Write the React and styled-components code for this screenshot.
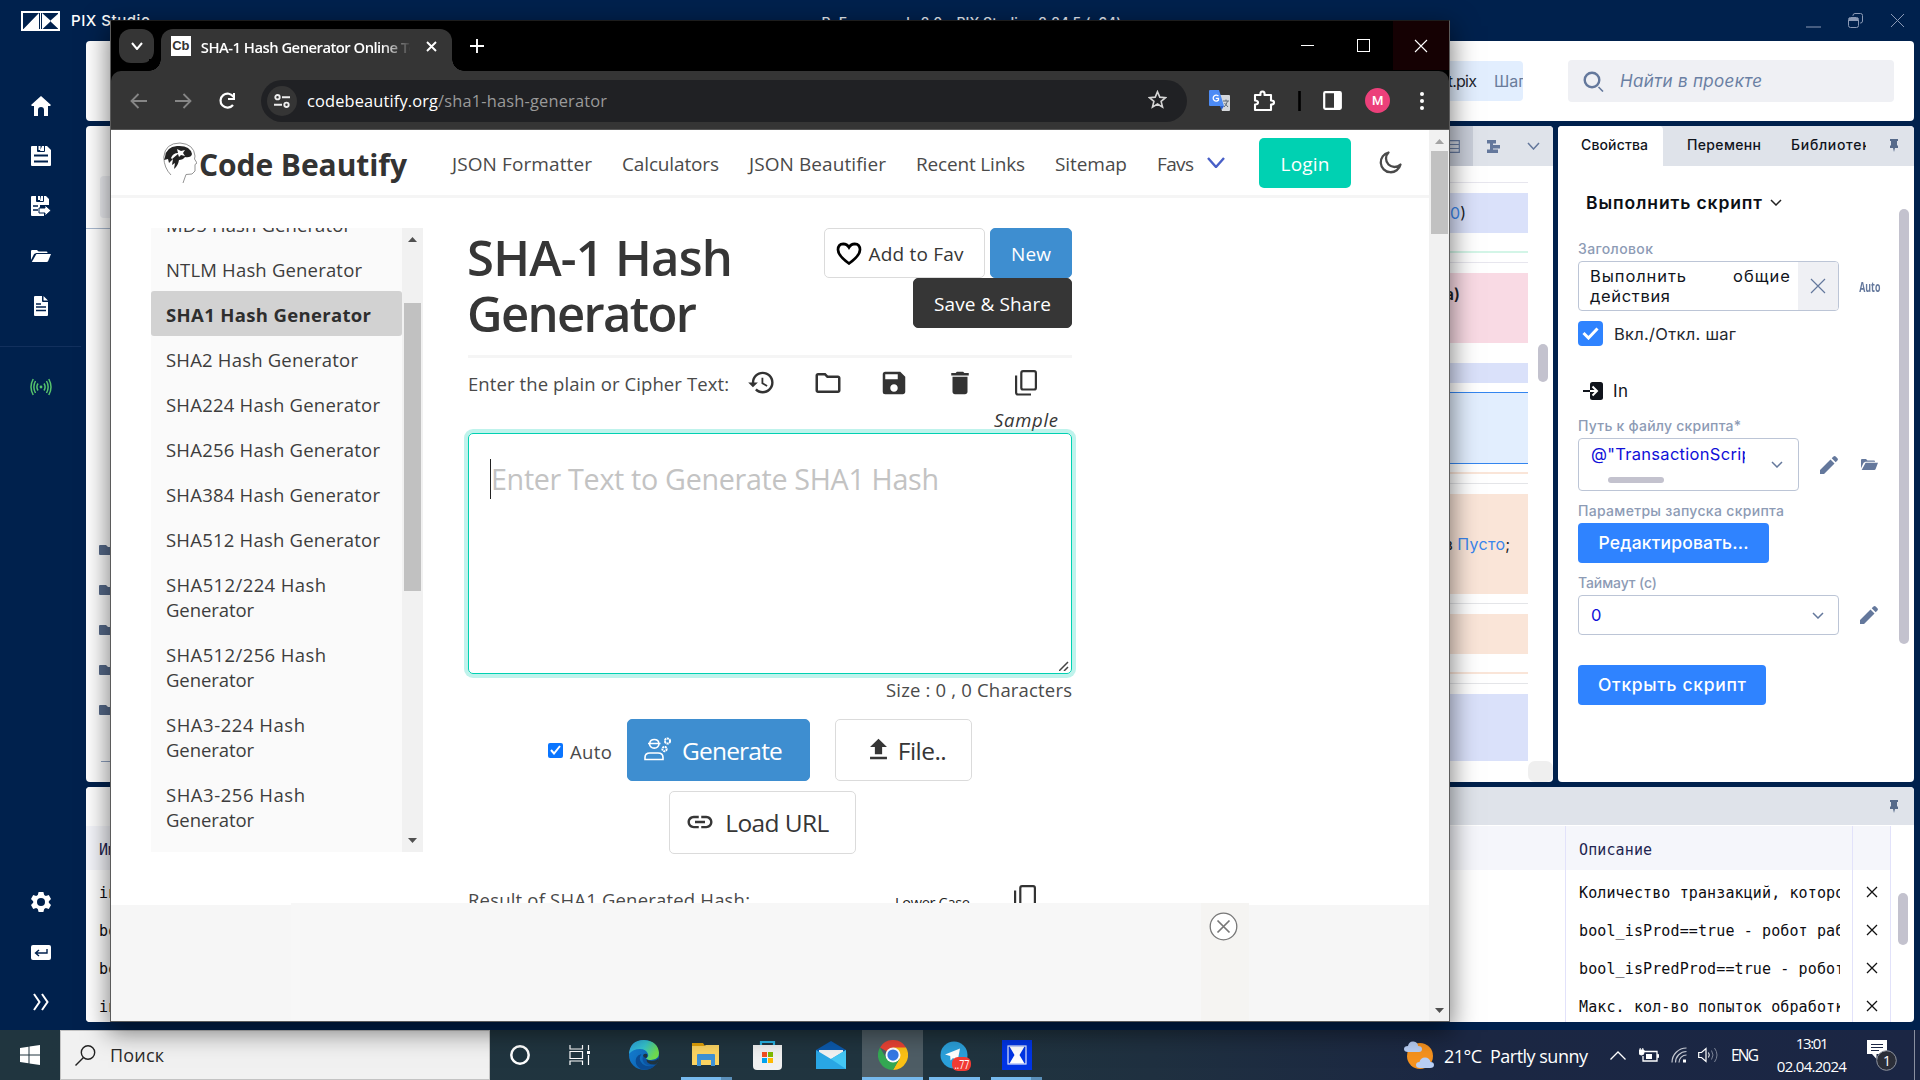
import React, { useLayoutEffect, useRef } from "react";
import styled, { createGlobalStyle, css } from "styled-components";
import { MdHistory, MdOutlineFolder, MdSave, MdDelete, MdUpload, MdLink } from "react-icons/md";

const ui = '"Open Sans", "Noto Sans", sans-serif';
const geo = 'Inter, "Open Sans", sans-serif';
const mono = '"DejaVu Sans Mono", "Liberation Mono", monospace';

const Global = createGlobalStyle`
  * { box-sizing: border-box; }
  body { margin: 0; overflow: hidden; font-family: ${ui}; }
  button { font-family: inherit; }
  svg { display: block; flex: none; }
`;

/* Text run whose tracking is computed so that it fills a known width. */
const Run = styled.span`
  display: inline-block;
  white-space: pre;
  flex: none;
`;
function Fit({ w, children }) {
  const ref = useRef(null);
  useLayoutEffect(() => {
    const el = ref.current;
    el.style.width = "auto";
    el.style.letterSpacing = "0px";
    const natural = el.getBoundingClientRect().width;
    el.style.letterSpacing = `${(w - natural) / (children.length - 1)}px`;
    el.style.width = `${w}px`;
  }, [w, children]);
  return <Run ref={ref}>{children}</Run>;
}

const Svg = ({ s, h, box, children, ...rest }) => (
  <svg width={s} height={h || s} viewBox={box || `0 0 ${s} ${h || s}`} fill="none" {...rest}>{children}</svg>
);

const Desktop = styled.div`
  position: relative;
  width: 1920px;
  height: 1080px;
  display: flex;
  flex-direction: column;
  overflow: hidden;
  background: #00214d;
`;

/* ---------- PIX Studio ---------- */
const Studio = styled.div`
  height: 1030px;
  display: flex;
  flex-direction: column;
  background: #00214d;
  font-family: ${geo};
`;
const StudioBar = styled.header`
  height: 41px;
  display: grid;
  grid-template-columns: 1fr auto 1fr;
  align-items: center;
  padding: 0 15px 0 21px;
  color: #e9edf4;
  font-size: 14px;
  font-weight: 500;
`;
const Caption = styled.div`padding: 3px 0 0 17px;`;
const Brand = styled.div`
  display: flex;
  align-items: center;
  gap: 11px;
  color: #fff;
  font-size: 15px;
`;
const WinButtons = styled.div`
  display: flex;
  justify-content: flex-end;
  gap: 27px;
`;
const StudioBody = styled.div`
  flex: 1;
  display: flex;
  min-height: 0;
`;
const Rail = styled.nav`
  width: 86px;
  padding: 40px 0 3px;
  display: flex;
  flex-direction: column;
`;
const RailItem = styled.div`
  height: 50px;
  width: 82px;
  display: flex;
  align-items: center;
  justify-content: center;
`;
const RailLine = styled.div`
  width: 81px;
  height: 1px;
  margin: 15px 0;
  background: #12305d;
`;
const Grow = styled.div`flex: 1;`;
const Workspace = styled.div`
  width: 1828px;
  display: flex;
  flex-direction: column;
  gap: 5px;
  padding-bottom: 8px;
`;
const Panel = styled.section`
  background: #fff;
  border-radius: 4px;
  overflow: hidden;
  display: flex;
  flex-direction: column;
`;
const Ribbon = styled(Panel)`
  height: 80px;
  flex-direction: row;
  align-items: center;
  justify-content: flex-end;
  padding-right: 20px;
  gap: 45px;
`;
const Crumb = styled.div`
  width: 200px;
  height: 40px;
  border-radius: 4px;
  background: #e2eefe;
  display: flex;
  align-items: center;
  justify-content: flex-end;
  gap: 17px;
  overflow: hidden;
  font-size: 16px;
  color: #22262e;
`;
const CrumbTail = styled.span`
  color: #6a7c9b;
  width: 29px;
  overflow: hidden;
  white-space: nowrap;
`;
const Search = styled.div`
  width: 326px;
  height: 42px;
  border-radius: 4px;
  background: #eff0f4;
  display: flex;
  align-items: center;
  gap: 16px;
  padding-left: 15px;
  color: #6a7fa3;
  font-size: 17px;
  font-style: italic;
`;
const Middle = styled.div`
  height: 656px;
  display: flex;
  gap: 5px;
`;
const Project = styled(Panel)`width: 320px;`;
const ProjectTop = styled.div`
  height: 103px;
  padding: 50px 14px 0;
  border-bottom: 1px solid #a9b9cf;
`;
const ProjectSearch = styled.div`
  height: 42px;
  border-radius: 4px;
  background: #eff0f4;
`;
const Folders = styled.div`
  flex: 1;
  padding: 316px 0 0 13px;
  display: flex;
  flex-direction: column;
  gap: 30px;
`;
const FolderRule = styled.div`
  height: 1px;
  margin: 16px 0 0 2px;
  background: #8fa2c0;
`;
const Flow = styled(Panel)`flex: 1;`;
const FlowBar = styled.div`
  height: 40px;
  background: #dfe3ea;
  display: flex;
  justify-content: flex-end;
  align-items: center;
`;
const FlowTool = styled.div`
  width: 40px;
  height: 40px;
  display: flex;
  align-items: center;
  justify-content: center;
  background: ${p => (p.$on ? "#c8cdd8" : "none")};
`;
const FlowBody = styled.div`
  flex: 1;
  display: flex;
`;
const Steps = styled.div`
  flex: 1;
  display: flex;
  flex-direction: column;
  align-items: stretch;
`;
const Step = styled.div`
  height: ${p => p.$h}px;
  margin-top: ${p => p.$gap}px;
  background: ${p => p.$c};
  display: flex;
  justify-content: flex-end;
  align-items: center;
  font-size: 16px;
  color: #1b1f27;
  ${p => p.$sel && css`border: solid #3385ef; border-width: 1px 0;`}
`;
const StepText = styled.span`
  padding-right: ${p => p.$r}px;
  margin-top: ${p => p.$t || 0}px;
  font-weight: ${p => p.$b || 400};
`;
const Link = styled.span`color: #3a86ec;`;
const FlowScroll = styled.div`
  width: 25px;
  display: flex;
  flex-direction: column;
  align-items: flex-end;
  justify-content: space-between;
  padding-top: 178px;
`;
const Thumb = styled.div`
  width: 10px;
  height: ${p => p.$h}px;
  margin-right: ${p => p.$r || 0}px;
  border-radius: 5px;
  background: #c3c2ce;
`;
const Corner = styled.div`
  width: 25px;
  height: 21px;
  border-radius: 7px;
  background: #efefef;
`;
const Props = styled(Panel)`width: 356px;`;
const PropTabs = styled.div`
  height: 40px;
  background: #dfe3ea;
  display: flex;
  align-items: center;
  font-size: 14px;
  font-weight: 500;
  color: #10141c;
`;
const PropTab = styled.div`
  width: ${p => p.$w}px;
  height: 40px;
  line-height: 38px;
  padding-left: ${p => p.$l}px;
  overflow: hidden;
  border-radius: 0 4px 0 0;
  background: ${p => (p.$on ? "#fff" : "none")};
`;
const PropBody = styled.div`
  flex: 1;
  display: flex;
  justify-content: space-between;
  padding: 43px 5px 0 20px;
`;
const Form = styled.div`
  width: 308px;
  margin-top: -18px;
  display: flex;
  flex-direction: column;
  align-items: flex-start;
`;
const FormTitle = styled.div`
  height: 24px;
  padding: 0 0 1px 8px;
  display: flex;
  align-items: center;
  gap: 8px;
  font-size: 17.5px;
  font-weight: 600;
  color: #0c0f15;
`;
const FieldLabel = styled.div`
  height: 20px;
  line-height: 20px;
  margin-top: ${p => p.$t}px;
  font-size: 14px;
  font-weight: 500;
  color: #8d9bb5;
`;
const FieldRow = styled.div`
  display: flex;
  align-items: center;
  margin-top: 2px;
`;
const Field = styled.div`
  width: ${p => p.$w}px;
  height: ${p => p.$h}px;
  border: 1px solid #bcc5d6;
  border-radius: 4px;
  display: flex;
  align-items: center;
  justify-content: space-between;
  overflow: hidden;
  padding: ${p => p.$p || "0 14px 0 12px"};
  font-size: 16.5px;
  color: #1010d8;
`;
const Script = styled.div`
  width: 154px;
  height: 100%;
  padding-top: 5px;
  display: flex;
  flex-direction: column;
  gap: 13px;
  line-height: 20px;
  white-space: nowrap;
  overflow: hidden;
`;
const Words = styled.div`
  width: 200px;
  line-height: 20px;
  color: #10141c;
  font-size: 16.5px;
`;
const Spread = styled.div`
  display: flex;
  justify-content: space-between;
`;
const Clear = styled.div`
  width: 40px;
  align-self: stretch;
  background: #eff0f4;
  display: flex;
  align-items: center;
  justify-content: center;
`;
const Auto = styled.span`
  width: 21px;
  margin-left: 20px;
  display: flex;
  justify-content: center;
  font: 700 14px "Open Sans", sans-serif;
  color: #64789c;
  > span { transform: scaleX(0.63); }
`;
const ScriptThumb = styled.div`
  width: 56px;
  height: 6px;
  margin-left: 17px;
  border-radius: 3px;
  background: #c3c2ce;
  flex: none;
`;
const Side = styled.div`margin-left: ${p => p.$l}px;`;
const Toggle = styled.div`
  height: 25px;
  margin-top: 10px;
  display: flex;
  align-items: center;
  gap: 11px;
  font-size: 16.5px;
  color: #24282f;
`;
const Tick = styled.div`
  width: 25px;
  height: 25px;
  border-radius: 4px;
  background: #2f83ff;
  display: flex;
  align-items: center;
  justify-content: center;
`;
const Group = styled.div`
  height: 24px;
  margin: 33px 0 0 5px;
  display: flex;
  align-items: center;
  gap: 10px;
  font-size: 17px;
  color: #10141c;
`;
const Action = styled.button`
  height: 40px;
  width: ${p => p.$w}px;
  margin-top: ${p => p.$t}px;
  padding: 0 0 2px;
  border: 0;
  border-radius: 4px;
  background: #2f83ff;
  color: #fff;
  font-size: 17.5px;
  font-weight: 500;
`;
const Vars = styled(Panel)`height: 235px;`;
const VarsBar = styled.div`
  height: 40px;
  display: flex;
  align-items: center;
  justify-content: flex-end;
  padding: 1px 16px 0 0;
  background: linear-gradient(90deg, #fff 200px, #dfe3ea 200px);
`;
const VarsBody = styled.div`
  flex: 1;
  display: flex;
`;
const Table = styled.div`
  width: 1805px;
  margin-top: 1px;
  font-family: ${mono};
  font-size: 15px;
`;
const TRow = styled.div`
  display: grid;
  grid-template-columns: 1480px 287px 38px;
  height: ${p => (p.$head ? 44 : 38)}px;
  line-height: ${p => (p.$head ? 40 : 38)}px;
  background: ${p => (p.$head ? "#f5f6fb" : "#fff")};
  color: ${p => (p.$head ? "#1f2550" : "#0d0d12")};
`;
const Cell = styled.div`
  border-right: 1px solid #e2e2fa;
  padding: 4px 12px 0 13px;
  display: flex;
  align-items: center;
  > span { overflow: hidden; white-space: nowrap; width: 100%; letter-spacing: 0.12px; }
  > svg { margin-top: -3px; }
`;
const VarsScroll = styled.div`padding: 68px 0 0 7px;`;

/* ---------- Browser window ---------- */
const Window = styled.div`
  position: absolute;
  left: 110px;
  top: 20px;
  width: 1340px;
  height: 1002px;
  border: 1px solid #5b5b5b;
  border-top-color: #1c1c1c;
  background: #000;
  display: flex;
  flex-direction: column;
  box-shadow: 0 8px 24px 2px rgba(0, 0, 0, 0.5);
  ${Run} { transform: translateY(1px); }
`;
const Strip = styled.div`
  height: 50px;
  background: #000;
  display: flex;
  align-items: flex-end;
  color: #fff;
`;
const TabMenu = styled.div`
  width: 35px;
  height: 34px;
  margin: 0 7px 8px 8px;
  border-radius: 12px;
  background: #353535;
  display: flex;
  align-items: center;
  justify-content: center;
`;
const Tab = styled.div`
  position: relative;
  width: 291px;
  height: 42px;
  border-radius: 12px 12px 0 0;
  background: #353535;
  display: flex;
  align-items: center;
  padding: 0 15px 8px 10px;
  gap: 10px;
  font-size: 14.8px;
  font-weight: 600;
  &::before, &::after {
    content: "";
    position: absolute;
    bottom: 0;
    width: 12px;
    height: 12px;
  }
  &::before { left: -12px; background: radial-gradient(circle at 0 0, #000 11.5px, #353535 12px); }
  &::after { right: -12px; background: radial-gradient(circle at 100% 0, #000 11.5px, #353535 12px); }
`;
const Fav = styled.div`
  width: 20px;
  height: 20px;
  background: #fff;
  color: #333;
  font: 700 13px/19px "Liberation Sans", sans-serif;
  text-align: center;
`;
const TabTitle = styled.div`
  width: 211px;
  overflow: hidden;
  white-space: nowrap;
  mask-image: linear-gradient(90deg, #000 180px, transparent 211px);
`;
const NewTab = styled.div`padding: 0 0 18px 18px;`;
const Controls = styled.div`
  margin-left: auto;
  align-self: stretch;
  display: flex;
`;
const Control = styled.div`
  width: 56px;
  height: 49px;
  padding-right: ${p => p.$r || 0}px;
  display: flex;
  align-items: center;
  justify-content: center;
  background: ${p => (p.$close ? "#150103" : "none")};
`;
const Toolbar = styled.div`
  height: 59px;
  border-bottom: 1px solid #565656;
  border-radius: 10px 10px 0 0;
  background: #353535;
  display: flex;
  align-items: center;
  padding: 1px 18px 0 19px;
  gap: 26px;
`;
const Omni = styled.div`
  width: 926px;
  height: 42px;
  margin-left: -1px;
  padding: 0 20px 2px 6px;
  border-radius: 21px;
  background: #202124;
  display: flex;
  align-items: center;
  font-size: 16.4px;
  color: #fff;
`;
const SiteInfo = styled.div`
  width: 30px;
  height: 30px;
  margin: 2px 10px 0 0;
  border-radius: 50%;
  background: #353535;
  display: flex;
  align-items: center;
  justify-content: center;
`;
const Path = styled.span`color: #9a9a9a; flex: 1;`;
const ToolIcons = styled.div`
  flex: 1;
  margin-left: -4px;
  display: flex;
  align-items: center;
  justify-content: space-between;
`;
const Avatar = styled.div`
  width: 25px;
  height: 25px;
  border-radius: 50%;
  background: #ec407a;
  color: #fff;
  font: 500 13px/25px Roboto, sans-serif;
  text-align: center;
`;
const View = styled.div`
  flex: 1;
  min-height: 0;
  display: flex;
`;
const Page = styled.div`
  position: relative;
  width: 1318px;
  overflow: hidden;
  background: #fff;
`;
const Scroll = styled.div`
  width: ${p => p.$w}px;
  background: #f1f1f1;
  display: flex;
  flex-direction: column;
  align-items: center;
  padding: ${p => p.$p};
`;
const ScrollThumb = styled.div`
  width: 17px;
  height: ${p => p.$h}px;
  margin: ${p => p.$t}px 0 auto;
  background: #c1c1c1;
`;
const Header = styled.header`
  height: 68px;
  padding: 0 25px 0 52px;
  border-bottom: 3px solid #f5f5f5;
  display: flex;
  align-items: center;
  font-size: 19px;
  color: #4a4a4a;
`;
const Logo = styled.div`
  display: flex;
  align-items: center;
  gap: 2px;
  width: 289px;
  padding-top: 1px;
  font-size: 30px;
  font-weight: 700;
  color: #333;
`;
const Menu = styled.nav`
  display: flex;
  gap: 30px;
`;
const Login = styled.button`
  width: 92px;
  height: 50px;
  margin: 0 28px 0 34px;
  padding: 0;
  border: 0;
  border-radius: 5px;
  background: #00d1b2;
  color: #fff;
  font-size: 19px;
  font-weight: 500;
`;
const Content = styled.div`
  display: flex;
  gap: 45px;
  padding: 30px 0 0 40px;
`;
const Aside = styled.aside`
  width: 272px;
  height: 624px;
  display: flex;
  background: #fafafa;
  overflow: hidden;
`;
const List = styled.ul`
  width: 251px;
  margin: -27px 0 0;
  padding: 0;
  list-style: none;
`;
const Item = styled.li`
  padding: 10px 15px;
  line-height: 25px;
  font-size: 18.5px;
  color: #3d3d3d;
  ${p => p.$on && css`background: #d2d2d2; border-radius: 3px; font-weight: 700; color: #2e2e2e;`}
  > span { display: block; height: 25px; }
`;
const Main = styled.main`
  width: 604px;
  color: #4a4a4a;
`;
const Hero = styled.div`
  height: 130px;
  border-bottom: 3px solid #f5f5f5;
  display: flex;
  justify-content: space-between;
`;
const H1 = styled.h1`
  margin: 0 0 0 -1px;
  font-size: 49px;
  line-height: 56px;
  font-weight: 600;
  color: #363636;
  > span { display: block; height: 56px; }
`;
const Buttons = styled.div`
  width: 260px;
  display: flex;
  flex-wrap: wrap;
  justify-content: flex-end;
  align-content: flex-start;
  column-gap: 5px;
`;
const Btn = styled.button`
  width: ${p => p.$w}px;
  height: ${p => p.$h || 50}px;
  padding: 0 ${p => p.$r || 0}px ${p => (p.$h ? 2 : 0)}px 0;
  border: 1px solid ${p => p.$bg || "#dbdbdb"};
  border-radius: 5px;
  background: ${p => p.$bg || "#fff"};
  color: ${p => (p.$bg ? "#fff" : "#363636")};
  font-size: ${p => p.$fs || 19}px;
  font-weight: ${p => (p.$bg ? 500 : 400)};
  display: flex;
  align-items: center;
  justify-content: center;
  gap: ${p => p.$gap || 0}px;
`;
const Tools = styled.div`
  height: 49px;
  display: flex;
  align-items: center;
  color: #333;
  font-size: 18.5px;
`;
const ToolLabel = styled.span`color: #4a4a4a; margin-top: -1px;`;
const Tool = styled.span`
  width: 66px;
  padding-right: 1px;
  display: flex;
  justify-content: center;
`;
const Sample = styled.div`
  height: 25px;
  line-height: 23px;
  padding-right: 14px;
  text-align: right;
  font-size: 18.5px;
  font-style: italic;
  color: #363636;
`;
const Area = styled.div`
  position: relative;
  height: 241px;
  margin-top: 1px;
  border: 1px solid #00d1b2;
  border-radius: 5px;
  box-shadow: 0 0 0 4px rgba(0, 209, 178, 0.25);
  padding: 25px 21px;
  display: flex;
  align-items: flex-start;
`;
const Placeholder = styled.div`
  border-left: 1px solid #222;
  height: 40px;
  line-height: 38px;
  font-size: 28.7px;
  color: #c3c3c3;
`;
const Grip = styled.div`
  position: absolute;
  right: 2px;
  bottom: 2px;
`;
const Size = styled.div`
  height: 45px;
  line-height: 30px;
  text-align: right;
  font-size: 18.5px;
`;
const Row = styled.div`
  display: flex;
  align-items: center;
  padding-left: ${p => p.$l}px;
  margin-top: ${p => p.$t || 0}px;
`;
const Check = styled.div`
  width: 15px;
  height: 15px;
  margin: 0 7px 0 0;
  border-radius: 2px;
  background: #0a75ff;
  display: flex;
  align-items: center;
  justify-content: center;
`;
const AutoLabel = styled.span`
  margin: 0 15px 0 0;
  font-size: 18.5px;
`;
const Result = styled.div`
  height: 32px;
  margin-top: 28px;
  display: flex;
  align-items: center;
  font-size: 18.5px;
`;
const Case = styled.span`
  margin: 6px 44px 0 145px;
  font-size: 14.5px;
  color: #222;
`;
const AdBar = styled.div`
  position: absolute;
  left: 0;
  right: 0;
  bottom: 0;
  height: 116px;
  padding-left: 180px;
  background: #f6f6f6;
`;
const Ad = styled.div`
  width: 958px;
  height: 118px;
  margin-top: -2px;
  background: #f7f7f7;
  display: flex;
  justify-content: flex-end;
`;
const AdClose = styled.div`
  width: 48px;
  padding: 9px 0 0 8px;
  background: #f5f4f2;
`;

/* ---------- Taskbar ---------- */
const Taskbar = styled.footer`
  height: 50px;
  display: flex;
  background: linear-gradient(90deg, #20353f 0%, #20343f 50%, #1f3040 60%, #1b2743 76%, #1b2644 100%);
  color: #fff;
`;
const Start = styled.div`
  width: 60px;
  display: flex;
  align-items: center;
  justify-content: center;
`;
const Find = styled.div`
  width: 430px;
  border: 1px solid #c3c3c3;
  background: #f1f1f1;
  display: flex;
  align-items: center;
  padding-left: 14px;
  gap: 14px;
  color: #2b2b2b;
  font-size: 18px;
`;
const Apps = styled.div`
  display: flex;
  margin-right: auto;
`;
const Slot = styled.div`
  width: ${p => p.$w}px;
  height: 50px;
  display: flex;
  flex-direction: column;
  align-items: center;
  justify-content: space-between;
  padding-top: 10px;
  background: ${p => (p.$on ? "#4e5d65" : "none")};
`;
const Bar = styled.div`
  width: ${p => p.$w}px;
  height: 3px;
  background: ${p => (p.$two ? "linear-gradient(90deg, #76b9ed 40px, #5a8fb9 40px)" : "#76b9ed")};
`;
const Tray = styled.div`
  display: flex;
  align-items: center;
`;
const Weather = styled.div`
  display: flex;
  align-items: center;
  gap: 10px;
  font-size: 18px;
  margin-right: 22px;
  ${Run} { transform: translateY(1px); }
`;
const TrayIcon = styled.div`
  width: ${p => p.$w}px;
  display: flex;
  align-items: center;
`;
const Lang = styled.div`font-size: 15.5px; margin-right: 17px;`;
const Clock = styled.div`
  width: 71px;
  text-align: center;
  font-size: 15px;
  line-height: 23px;
  margin-right: 20px;
`;
const Peek = styled.div`
  width: 6px;
  height: 50px;
  margin-left: 16px;
  border-left: 1px solid #8a90a0;
`;

const Chev = ({ w = 12, h = 7, c = "#64789c", sw = 1.5 }) => (
  <Svg s={w} h={h}><path d={`M1 1 L${w / 2} ${h - 1} L${w - 1} 1`} stroke={c} strokeWidth={sw} /></Svg>
);
const Cross = ({ s, c, sw = 1.4 }) => (
  <Svg s={s}><path d={`M1 1 L${s - 1} ${s - 1} M${s - 1} 1 L1 ${s - 1}`} stroke={c} strokeWidth={sw} /></Svg>
);
const Pin = () => (
  <Svg s={8} h={14}><path d="M0 0h8v2H7v4l1 1v2H5L4 13 3 9H0V7l1-1V2H0z" fill="#566a8a" /></Svg>
);
const Pencil = () => (
  <Svg s={18}><path d="M0 18v-4L10.500 3.500l4 4L4 18zM11.700 2.300L13.500.600a1.600 1.600 0 0 1 2.200 0l1.700 1.700a1.600 1.600 0 0 1 0 2.200L15.700 6.300z" fill="#64789c" /></Svg>
);
const OpenFolder = ({ c = "#64789c", w = 17, h = 11 }) => (
  <Svg s={w} h={h} box="0 0 17 12" preserveAspectRatio="none"><path d="M0 1.200Q0 0 1 0h4l1.500 1.500H13q1 0 1 1V3H4.500L2.600 4 0 10z" fill={c} /><path d="M4.600 4H17l-2.500 7.200q-.400.800-1.200.800H.700z" fill={c} /></Svg>
);
const Copy = () => (
  <Svg s={22} h={26} stroke="#333" strokeWidth="2.200">
    <rect x="6.300" y="1.100" width="14.600" height="18.400" rx="1.800" />
    <path d="M1.100 5.500v17q0 2 2 2H16" />
  </Svg>
);

const items = [
  [["MD5 Hash Generator", 185]], [["NTLM Hash Generator", 196]], [["SHA1 Hash Generator", 205], true],
  [["SHA2 Hash Generator", 192]], [["SHA224 Hash Generator", 214]], [["SHA256 Hash Generator", 214]],
  [["SHA384 Hash Generator", 214]], [["SHA512 Hash Generator", 214]],
  [["SHA512/224 Hash", 160, "Generator", 88]], [["SHA512/256 Hash", 160, "Generator", 88]],
  [["SHA3-224 Hash", 139, "Generator", 88]], [["SHA3-256 Hash", 139, "Generator", 88]],
];
const menu = [["JSON Formatter", 140], ["Calculators", 97], ["JSON Beautifier", 137], ["Recent Links", 109], ["Sitemap", 72], ["Favs", 37]];
const rows = [
  ["int_count", "Количество транзакций, которое"],
  ["bool_isProd", "bool_isProd==true - робот работает"],
  ["bool_isPredProd", "bool_isPredProd==true - робот р"],
  ["int_max", "Макс. кол-во попыток обработки"],
];

function StudioApp() {
  return (
    <Studio>
      <StudioBar>
        <Brand>
          <Svg s={39} h={20}>
            <rect x="1" y="1" width="37" height="18" stroke="#fff" strokeWidth="2" />
            <path d="M1.500 19L18 2v17zM21 2l9 8-9 8.500zM38 2l-9 8 9 8.500z" fill="#fff" />
            <path d="M19.500 1v18" stroke="#fff" />
          </Svg>
          <Fit w={79}>PIX Studio</Fit>
        </Brand>
        <Caption><Fit w={300}>ReFramework_2.0 - PIX Studio v2.24.5 (x64)</Fit></Caption>
        <WinButtons>
          <Svg s={15}><path d="M0 14h15" stroke="#8a99b5" /></Svg>
          <Svg s={15}><path d="M5 3V2.500Q5 .500 7 .500h5.500q2 0 2 2V8q0 2-2 2H12" stroke="#8a99b5" /><rect x=".500" y="4.500" width="10" height="10" rx="2" stroke="#8a99b5" /><path d="M1 5h9v3H1z" fill="#8a99b5" /></Svg>
          <Cross s={15} c="#8a99b5" sw={1} />
        </WinButtons>
      </StudioBar>
      <StudioBody>
        <Rail>
          <RailItem><Svg s={20}><path d="M10 0L20 9l-1 1h-2v10h-4v-6q0-3-3-3t-3 3v6H3V10H1L0 9z" fill="#fff" /></Svg></RailItem>
          <RailItem><Svg s={20}><path d="M0 1q0-1 1-1h5v5q0 1 1 1h6q1 0 1-1V0h2l4 4v15q0 1-1 1H1q-1 0-1-1zM7.500 0h2v4h-2zM11 0h2v5h-4z" fill="#fff" /><path d="M3 9.500h14M3 15.500h14" stroke="#00214d" strokeWidth="2" /></Svg></RailItem>
          <RailItem><Svg s={20}><path d="M0 1q0-1 1-1h4v5q0 1 1 1h6q1 0 1-1V0h2l3 3v6H9v8h4v3H1q-1 0-1-1zM7 0h2v4H7zM10 0h2v5h-3z" fill="#fff" /><path d="M2 10h5M2 14h5" stroke="#00214d" strokeWidth="1.500" /><path d="M8 12h6V9l6 5.500-6 5.500v-3H8z" fill="#fff" stroke="#00214d" /></Svg></RailItem>
          <RailItem><OpenFolder c="#fff" w={20} h={12} /></RailItem>
          <RailItem><Svg s={14} h={20}><path d="M0 1q0-1 1-1h7v5q0 1 1 1h5v13q0 1-1 1H1q-1 0-1-1zM9.500 0L14 4.500H9.500z" fill="#fff" /><path d="M2 8h5M2 11h10M2 14.500h10" stroke="#00214d" strokeWidth="1.300" /></Svg></RailItem>
          <RailLine />
          <RailItem><Svg s={22} h={18} stroke="#56c46c" strokeWidth="1.500"><circle cx="11" cy="9" r="1.400" fill="#56c46c" stroke="none" /><path d="M8 5.500Q5.800 9 8 12.500M5.500 3Q2.200 9 5.500 15M3.200 1Q-1.200 9 3.200 17M14 5.500q2.200 3.500 0 7M16.500 3q3.300 6 0 12M18.800 1q4.400 8 0 16" /></Svg></RailItem>
          <Grow />
          <RailItem><Svg s={20}><path d="M7.600 0h4.800l.8 3 1.600.9 3-.9 2.200 4-2.200 2.200v1.600L20 13l-2.200 4-3-.9-1.600.9-.8 3H7.600l-.8-3-1.600-.9-3 .9L0 13l2.200-2.200V9.200L0 7l2.200-4 3 .9L6.800 3z" fill="#fff" /><circle cx="10" cy="10" r="4" fill="#00214d" /></Svg></RailItem>
          <RailItem><Svg s={20} h={15}><rect width="20" height="15" rx="2" fill="#fff" /><path d="M16 4v4H5M8 5L4.500 8 8 11" stroke="#00214d" strokeWidth="1.400" /></Svg></RailItem>
          <RailItem><Svg s={16} h={18}><path d="M1 1l5.500 8L1 17M9 1l5.500 8L9 17" stroke="#fff" strokeWidth="2" /></Svg></RailItem>
        </Rail>
        <Workspace>
          <Ribbon>
            <Crumb><Fit w={37}>st.pix</Fit><CrumbTail>Шаги</CrumbTail></Crumb>
            <Search>
              <Svg s={21}><circle cx="9" cy="9" r="7.300" stroke="#64789c" strokeWidth="2.400" /><path d="M15.500 16l4.500 4.500" stroke="#64789c" strokeWidth="1.600" /></Svg>
              <Fit w={142}>Найти в проекте</Fit>
            </Search>
          </Ribbon>
          <Middle>
            <Project>
              <ProjectTop><ProjectSearch /></ProjectTop>
              <Folders>
                {[0, 1, 2, 3, 4].map(i => (
                  <Svg key={i} s={16} h={10}><path d="M0 1q0-1 1-1h6l2 2h6q1 0 1 1v6q0 1-1 1H1q-1 0-1-1z" fill="#566a8a" /></Svg>
                ))}
                <FolderRule />
              </Folders>
            </Project>
            <Flow>
              <FlowBar>
                <FlowTool $on><Svg s={16} h={13}><path d="M0 .700h14.300v11.600H0M0 4.500h14M0 8.500h14" stroke="#64789c" strokeWidth="1.200" /></Svg></FlowTool>
                <FlowTool><Svg s={13}><path d="M0 0h9v3.500H6V5h7v3.500H6V9.500h5V13H0V9.500h3V3.500H0z" fill="#64789c" /></Svg></FlowTool>
                <FlowTool><Chev w={13} h={8} /></FlowTool>
              </FlowBar>
              <FlowBody>
                <Steps>
                  <Step $gap={16} $h={1} $c="#e7e6ee" />
                  <Step $gap={10} $h={40} $c="#dae1fa"><StepText $r={62}><Link>0</Link>)</StepText></Step>
                  <Step $gap={18} $h={2} $c="#d3f5e7" />
                  <Step $gap={9} $h={1} $c="#e7e6ee" />
                  <Step $gap={10} $h={70} $c="#f9dae4"><StepText $r={68} $t={-28} $b={600}>a)</StepText></Step>
                  <Step $gap={20} $h={20} $c="#dae1fa" />
                  <Step $gap={9} $h={72} $c="#e2eefe" $sel />
                  <Step $gap={8} $h={2} $c="#fae5d8" />
                  <Step $gap={9} $h={1} $c="#e4e5e8" />
                  <Step $gap={10} $h={100} $c="#fae5d8"><StepText $r={18}>в <Link><Fit w={48}>Пусто</Fit></Link>;</StepText></Step>
                  <Step $gap={9} $h={1} $c="#e4e5e8" />
                  <Step $gap={10} $h={40} $c="#fae5d8" />
                  <Step $gap={18} $h={2} $c="#fae5d8" />
                  <Step $gap={9} $h={1} $c="#e4e5e8" />
                  <Step $gap={10} $h={67} $c="#dae1fa" />
                </Steps>
                <FlowScroll><Thumb $h={38} $r={5} /><Corner /></FlowScroll>
              </FlowBody>
            </Flow>
            <Props>
              <PropTabs>
                <PropTab $on $w={105} $l={23}><Fit w={67}>Свойства</Fit></PropTab>
                <PropTab $w={98} $l={24}><Fit w={74}>Переменн</Fit></PropTab>
                <PropTab $w={105} $l={30}><Fit w={79}>Библиотек</Fit></PropTab>
                <Side $l={24}><Pin /></Side>
              </PropTabs>
              <PropBody>
                <Form>
                  <FormTitle><Fit w={176}>Выполнить скрипт</Fit><Chev c="#222" /></FormTitle>
                  <FieldLabel $t={24}><Fit w={75}>Заголовок</Fit></FieldLabel>
                  <FieldRow>
                    <Field $w={261} $h={50} $p="0 0 0 11px">
                      <Words>
                        <Spread><Fit w={96}>Выполнить</Fit><Fit w={57}>общие</Fit></Spread>
                        <Fit w={80}>действия</Fit>
                      </Words>
                      <Clear><Cross s={16} c="#64789c" sw={1.2} /></Clear>
                    </Field>
                    <Auto><span>Auto</span></Auto>
                  </FieldRow>
                  <Toggle>
                    <Tick><Svg s={17} h={13}><path d="M1.500 6l5 5L15.500 1.500" stroke="#fff" strokeWidth="3" /></Svg></Tick>
                    <Fit w={122}>Вкл./Откл. шаг</Fit>
                  </Toggle>
                  <Group>
                    <Svg s={20} h={18}><rect x="7" width="13" height="18" rx="2.500" fill="#10141c" /><path d="M0 9h8" stroke="#10141c" strokeWidth="2" /><path d="M7 9h7M9.500 4.500L14 9l-4.500 4.500" stroke="#fff" strokeWidth="2" /></Svg>
                    <Fit w={15}>In</Fit>
                  </Group>
                  <FieldLabel $t={13}><Fit w={163}>Путь к файлу скрипта*</Fit></FieldLabel>
                  <FieldRow>
                    <Field $w={221} $h={53} $p="0 15px 0 12px">
                      <Script><Fit w={159}>@"TransactionScrip</Fit><ScriptThumb /></Script>
                      <Chev />
                    </Field>
                    <Side $l={21}><Pencil /></Side>
                    <Side $l={23}><OpenFolder /></Side>
                  </FieldRow>
                  <FieldLabel $t={10}><Fit w={206}>Параметры запуска скрипта</Fit></FieldLabel>
                  <Action $w={191} $t={2}><Fit w={150}>Редактировать...</Fit></Action>
                  <FieldLabel $t={10}><Fit w={79}>Таймаут (с)</Fit></FieldLabel>
                  <FieldRow>
                    <Field $w={261} $h={40}>0<Chev /></Field>
                    <Side $l={21}><Pencil /></Side>
                  </FieldRow>
                  <Action $w={188} $t={30}><Fit w={148}>Открыть скрипт</Fit></Action>
                </Form>
                <Thumb $h={435} />
              </PropBody>
            </Props>
          </Middle>
          <Vars>
            <VarsBar><Pin /></VarsBar>
            <VarsBody>
              <Table>
                <TRow $head><Cell><span>Имя</span></Cell><Cell><span>Описание</span></Cell><Cell /></TRow>
                {rows.map(r => (
                  <TRow key={r[0]}>
                    <Cell><span>{r[0]}</span></Cell>
                    <Cell><span>{r[1]}</span></Cell>
                    <Cell><Cross s={12} c="#111" sw={1.3} /></Cell>
                  </TRow>
                ))}
              </Table>
              <VarsScroll><Thumb $h={52} /></VarsScroll>
            </VarsBody>
          </Vars>
        </Workspace>
      </StudioBody>
    </Studio>
  );
}

const Head = () => (
  <Svg s={34} h={42}>
    <path d="M8 33Q1 26 .800 15 2 1 17 1q14 1 15 13l-.500 3L34 21l-2 1.500V29l-3 3-6 .500L20 41" stroke="#888" strokeWidth=".900" />
    <path d="M2 15Q3 5 14 4q13-1 15 8-1 4-7 3-2 3-6 3-1 6-5 9l1-6-3 2 1-6-4 4-1-4-4 1z" fill="#222" />
    <path d="M8 16q2-5 7-5l-1-4 4 2 4-1-2 3 2 3-4-1-2 2-1-3-6 5z" fill="#fff" />
  </Svg>
);

function Browser() {
  return (
    <Window>
      <Strip>
        <TabMenu><Chev w={12} h={8} c="#fff" sw={2} /></TabMenu>
        <Tab>
          <Fav>Cb</Fav>
          <TabTitle><Fit w={217}>SHA-1 Hash Generator Online To</Fit></TabTitle>
          <Side $l={6}><Cross s={11} c="#fff" sw={1.9} /></Side>
        </Tab>
        <NewTab><Svg s={14}><path d="M7 0v14M0 7h14" stroke="#fff" strokeWidth="1.900" /></Svg></NewTab>
        <Controls>
          <Control $r={4}><Svg s={13}><path d="M0 6.500h13" stroke="#fff" /></Svg></Control>
          <Control $r={4}><Svg s={13}><rect x=".500" y=".500" width="12" height="12" stroke="#fff" /></Svg></Control>
          <Control $close><Cross s={14} c="#fff" sw={1.1} /></Control>
        </Controls>
      </Strip>
      <Toolbar>
        <Svg s={18} h={16}><path d="M17 8H2M8.500 1L1.500 8l7 7" stroke="#868686" strokeWidth="1.800" /></Svg>
        <Svg s={18} h={16}><path d="M1 8h15M9.500 1l7 7-7 7" stroke="#868686" strokeWidth="1.800" /></Svg>
        <Svg s={18}><path d="M15 13a7 7 0 1 1 .500-8" stroke="#fff" strokeWidth="2.200" /><path d="M16 1v6h-6" stroke="#fff" strokeWidth="2" /></Svg>
        <Omni>
          <SiteInfo><Svg s={16} h={14} stroke="#eee" strokeWidth="1.900"><circle cx="3.500" cy="3.200" r="2.200" /><path d="M8 3.200h8M0 10.800h8" /><circle cx="12.500" cy="10.800" r="2.200" /></Svg></SiteInfo>
          <Fit w={131}>codebeautify.org</Fit>
          <Path><Fit w={169}>/sha1-hash-generator</Fit></Path>
          <Svg s={19} box="0 0 20 20"><path d="M10 1.800l2.400 5.700 6.100.5-4.700 4 1.500 6L10 14.700 4.700 18l1.500-6-4.700-4 6.100-.5z" stroke="#d5d5d5" strokeWidth="1.700" /></Svg>
        </Omni>
        <ToolIcons>
          <Svg s={21}><path d="M8 5h12q1 0 1 1v14q0 1-1 1h-7z" fill="#d5d8dc" /><path d="M1 0h9l5 16H1q-1 0-1-1V1q0-1 1-1z" fill="#4c8bf5" /><path d="M11 16h4l-2.500 4z" fill="#2a5fcd" /><path d="M9.500 6.200A3 3 0 1 0 9.500 10V8.300H6.800" stroke="#fff" strokeWidth="1.300" /><path d="M14 11h6M17 9.500V11M18.500 11q-1 4-3.500 6M15.500 13l3.500 4" stroke="#5f6b78" /></Svg>
          <Svg s={22}><path d="M2 5h5.500Q7 1.500 9.500 1.500T11.500 5H18v5.500q3 0 3 2t-3 2V20H2v-5.500q3-.200 3-2t-3-2z" stroke="#fff" strokeWidth="2.100" strokeLinejoin="round" /></Svg>
          <Svg s={3} h={20}><path d="M1.500 0v20" stroke="#000" strokeWidth="2.600" /></Svg>
          <Svg s={19}><rect x="1.200" y="1.200" width="16.600" height="16.600" rx="1" stroke="#fff" strokeWidth="2.200" /><path d="M11 1h7v17h-7z" fill="#fff" /></Svg>
          <Avatar>M</Avatar>
          <Svg s={18}><circle cx="9" cy="2" r="2" fill="#fff" /><circle cx="9" cy="9" r="2" fill="#fff" /><circle cx="9" cy="16" r="2" fill="#fff" /></Svg>
        </ToolIcons>
      </Toolbar>
      <View>
        <Page>
          <Header>
            <Logo><Head /><Fit w={208}>Code Beautify</Fit></Logo>
            <Menu>{menu.map(([t, w]) => <Fit key={t} w={w}>{t}</Fit>)}</Menu>
            <Side $l={13}><Chev w={18} h={11} c="#485fc7" sw={2.4} /></Side>
            <Login><Fit w={49}>Login</Fit></Login>
            <Svg s={23} h={23}><path d="M9.500 1.500A10 10 0 1 0 21.500 13.500 7.500 7.500 0 0 1 9.500 1.500z" stroke="#4a4a4a" strokeWidth="2.300" strokeLinejoin="round" /></Svg>
          </Header>
          <Content>
            <Aside>
              <List>
                {items.map(([t, on]) => (
                  <Item key={t[0]} $on={on}><span><Fit w={t[1]}>{t[0]}</Fit></span>{t[2] && <span><Fit w={t[3]}>{t[2]}</Fit></span>}</Item>
                ))}
              </List>
              <Scroll $w={21} $p="9px 0 9px">
                <Svg s={9} h={5}><path d="M0 5L4.500 0 9 5z" fill="#505050" /></Svg>
                <ScrollThumb $h={288} $t={61} />
                <Svg s={9} h={5}><path d="M0 0l4.500 5L9 0z" fill="#505050" /></Svg>
              </Scroll>
            </Aside>
            <Main>
              <Hero>
                <H1><span><Fit w={266}>SHA-1 Hash</Fit></span><span><Fit w={230}>Generator</Fit></span></H1>
                <Buttons>
                  <Btn $w={161} $gap={7} $r={10}>
                    <Svg s={26} h={23}><path d="M13 21.500Q2 13.500 2 7.800 2 2 7.300 1.800 11 1.800 13 5.300 15 1.800 18.700 1.800 24 2 24 7.800 24 13.500 13 21.500z" stroke="#000" strokeWidth="2.700" /></Svg>
                    <Fit w={95}>Add to Fav</Fit>
                  </Btn>
                  <Btn $w={82} $bg="#3e8ed0"><Fit w={40}>New</Fit></Btn>
                  <Btn $w={159} $bg="#363636"><Fit w={117}>{"Save & Share"}</Fit></Btn>
                </Buttons>
              </Hero>
              <Tools>
                <ToolLabel><Fit w={261}>Enter the plain or Cipher Text:</Fit></ToolLabel>
                <Tool><MdHistory size={29} /></Tool>
                <Tool><MdOutlineFolder size={30} /></Tool>
                <Tool><MdSave size={30} /></Tool>
                <Tool><MdDelete size={30} /></Tool>
                <Tool><Copy /></Tool>
              </Tools>
              <Sample><Fit w={64}>Sample</Fit></Sample>
              <Area>
                <Placeholder><Fit w={448}>Enter Text to Generate SHA1 Hash</Fit></Placeholder>
                <Grip><Svg s={10}><path d="M0 10L9 1M5 10l4-4" stroke="#444" strokeWidth="1.500" /></Svg></Grip>
              </Area>
              <Size><Fit w={186}>Size : 0 , 0 Characters</Fit></Size>
              <Row $l={80}>
                <Check><Svg s={11} h={10}><path d="M1 5l3 3.500L10 1" stroke="#fff" strokeWidth="2" /></Svg></Check>
                <AutoLabel><Fit w={42}>Auto</Fit></AutoLabel>
                <Btn $w={183} $h={62} $fs={24.5} $bg="#3e8ed0" $gap={10} $r={11}>
                  <Svg s={28} h={24} stroke="#fff" strokeWidth="1.600">
                    <path d="M1 22.500v-2Q1 16 6 16h8q5 0 5 4.500v2zM5.500 7a4.800 4.800 0 0 0 9.500 0M4 6.500h12.500M5.800 6q.500-3.500 4.500-3.500T14.800 6" />
                    <circle cx="23.500" cy="4" r="2.600" strokeDasharray="2.200 .600" strokeWidth="2" /><circle cx="20.500" cy="12" r="2.200" strokeDasharray="1.800 .600" strokeWidth="1.900" />
                  </Svg>
                  <Fit w={101}>Generate</Fit>
                </Btn>
                <Side $l={25}><Btn $w={137} $h={62} $fs={24.5} $gap={5}><Side $l={3}><MdUpload size={29} /></Side><Fit w={49}>File..</Fit></Btn></Side>
              </Row>
              <Row $l={201} $t={10}>
                <Btn $w={187} $h={63} $fs={24.5} $gap={10} $r={11}><MdLink size={30} /><Fit w={104}>Load URL</Fit></Btn>
              </Row>
              <Result>
                <Fit w={282}>Result of SHA1 Generated Hash:</Fit>
                <Case><Fit w={75}>Lower Case</Fit></Case>
                <Copy />
              </Result>
            </Main>
          </Content>
          <AdBar>
            <Ad>
              <AdClose><Svg s={29}><circle cx="14.500" cy="14.500" r="13.300" fill="#fff" stroke="#777" strokeWidth="1.300" /><path d="M8.500 8.500l12 12M20.500 8.500l-12 12" stroke="#777" strokeWidth="1.700" /></Svg></AdClose>
            </Ad>
          </AdBar>
        </Page>
        <Scroll $w={20} $p="9px 0 8px">
          <Svg s={9} h={5}><path d="M0 5L4.500 0 9 5z" fill="#a3a3a3" /></Svg>
          <ScrollThumb $h={83} $t={7} />
          <Svg s={9} h={5}><path d="M0 0l4.500 5L9 0z" fill="#505050" /></Svg>
        </Scroll>
      </View>
    </Window>
  );
}

function TaskbarView() {
  return (
    <Taskbar>
      <Start><Svg s={20}><path d="M0 3l8.500-1.200v7.700H0zM9.500 1.600L20 0v9.500H9.500zM0 10.500h8.500v7.700L0 17zM9.500 10.500H20V20L9.500 18.400z" fill="#fff" /></Svg></Start>
      <Find>
        <Svg s={21}><circle cx="13" cy="7.500" r="6.700" stroke="#222" strokeWidth="1.400" /><path d="M8.500 12.500L.500 20.500" stroke="#222" strokeWidth="1.400" /></Svg>
        <Fit w={54}>Поиск</Fit>
      </Find>
      <Apps>
        <Slot $w={60}><Svg s={30}><circle cx="15" cy="15" r="8.700" stroke="#fff" strokeWidth="2.500" /></Svg></Slot>
        <Slot $w={60}><Svg s={30} stroke="#fff" strokeWidth="1.200"><path d="M5 5v4h12.500V5M5 25v-4h12.500v4M5 11.500h12.500v7H5zM23.500 5v5M23.500 15v10" /><path d="M22 11h3v3h-3z" fill="#fff" stroke="none" /></Svg></Slot>
        <Slot $w={67}>
          <Svg s={30}>
            <defs>
              <linearGradient id="e1" x1="0" y1="0" x2="1" y2=".4"><stop offset="0" stopColor="#2a9fe5" /><stop offset=".55" stopColor="#36c6d0" /><stop offset="1" stopColor="#6fdc4e" /></linearGradient>
              <linearGradient id="e2" x1="0" y1="0" x2="1" y2="1"><stop offset="0" stopColor="#1585dc" /><stop offset="1" stopColor="#0c59a4" /></linearGradient>
            </defs>
            <circle cx="15" cy="15" r="15" fill="url(#e2)" />
            <path d="M0 14Q1 0 15 0q14 1 15 13 0 7-8 7-5 0-5-2 3-1 2-4-2-5-8-5Q4 9 0 14z" fill="url(#e1)" />
            <path d="M12.500 14q-4 5 1 10 5 4 13 1-5 6-14 4.500-8-5-5-12 1.500-3 5-3.500z" fill="#0b4c94" />
            <path d="M17 18q0 2 5 2 5 0 7.500-3 .500 4-2.500 8-6 2-11-1-4-4-1.500-8.500 2-2.500 4-1 .500 2-1.500 3.500z" fill="#0e55a3" />
            <path d="M17.500 18q-3 0-3.500-3 2-2 4-1 1 2-.500 4zM17.500 19.500q4 2.500 10 .500l2-2v3l-2.500 3.500q-5 .500-8-1.500-1.500-1.500-1.500-3.500z" fill="#20343f" />
          </Svg>
        </Slot>
        <Slot $w={58}>
          <Svg s={30}><path d="M1 3h11l2 3H1z" fill="#e2a208" /><path d="M1 6h12l2-1h13v20H1z" fill="#fcd462" /><path d="M6 26V15q0-1 1-1h16q1 0 1 1v11h-4v-6h-10v6z" fill="#3f92d6" /></Svg>
          <Bar $w={51} $two />
        </Slot>
        <Slot $w={64}>
          <Svg s={30}><path d="M9 6V2h13v4" stroke="#29b6e8" strokeWidth="2.200" /><path d="M1 5h29v21q0 4-4 4H5q-4 0-4-4z" fill="#f1f1f1" /><path d="M10 12h5v5h-5z" fill="#f25022" /><path d="M16 12h5v5h-5z" fill="#7fba00" /><path d="M10 18h5v5h-5z" fill="#00a4ef" /><path d="M16 18h5v5h-5z" fill="#ffb900" /></Svg>
        </Slot>
        <Slot $w={63}>
          <Svg s={30}><path d="M0 10L15 1l15 9v4H0z" fill="#0b59ab" /><path d="M3 10h24v9H3z" fill="#f3f3f3" /><path d="M0 10l15 9L30 10v19H0z" fill="#2aa7e6" /><path d="M15 19L30 10v19z" fill="#45c8f5" /></Svg>
        </Slot>
        <Slot $w={61} $on>
          <Svg s={30} box="0 0 48 48"><path d="M24 24L3.200 12A24 24 0 0 1 44.800 12z" fill="#ea4335" /><path d="M24 12h20.800A24 24 0 0 1 24 48L34.400 30z" fill="#fbc116" /><path d="M3.200 12L13.600 30 24 35l10.400-5L24 48A24 24 0 0 1 3.200 12z" fill="#34a853" /><circle cx="24" cy="24" r="12" fill="#fff" /><circle cx="24" cy="24" r="9" fill="#3578e5" /></Svg>
          <Bar $w={61} />
        </Slot>
        <Slot $w={63}>
          <Svg s={32} h={31}><circle cx="15" cy="15" r="13.500" fill="#2ba0da" /><path d="M6 14.500L21 8.500l-2.500 13-4.500-3.500-2.500 2.500-.300-4.500z" fill="#fff" /><rect x="13" y="17" width="19" height="14" rx="6" fill="#f23c34" /><text x="15.500" y="28.500" fill="#fff" fontFamily="Open Sans, sans-serif" fontSize="12" textLength="15" lengthAdjust="spacingAndGlyphs">..77</text></Svg>
          <Bar $w={51} />
        </Slot>
        <Slot $w={61}>
          <Svg s={30}><path d="M0 0h30v30H0z" fill="#0135e6" /><rect x="6" y="6" width="18" height="18" stroke="#dfe6ff" strokeWidth="1.200" /><path d="M7.500 6.500h15L17.500 15l5 8.500h-15l5-8.500z" fill="#fff" /></Svg>
          <Bar $w={51} $two />
        </Slot>
      </Apps>
      <Tray>
        <Weather>
          <Svg s={30}><circle cx="16" cy="16" r="13" fill="#f6921e" /><path d="M4 12q-4 0-4-3t4-3q1-5 5.500-4.500Q14 2 14 6q4 0 4 3t-3 3zM16 28q-4 0-4-3t3.500-3q1-4.500 5.500-4.500T26.500 22q3.500 0 3.500 3t-4 3z" fill="#b9cff5" /></Svg>
          <Fit w={144}>21°C  Partly sunny</Fit>
        </Weather>
        <TrayIcon $w={29}><Svg s={16} h={9}><path d="M.500 8.500L8 1l7.500 7.500" stroke="#fff" strokeWidth="1.300" /></Svg></TrayIcon>
        <TrayIcon $w={32}><Svg s={20} h={14}><path d="M5 3.500h13V13H4V8" stroke="#fff" strokeWidth="1.300" /><path d="M18.500 6.500h1v3h-1z" fill="#fff" stroke="#fff" /><path d="M7 6h6v5H7z" fill="#fff" /><path d="M0 2h5v2.500Q5 7 2.500 7T0 4.500zM1.200 0v2M3.800 0v2" fill="#fff" stroke="#fff" /></Svg></TrayIcon>
        <TrayIcon $w={27}><Svg s={16}><path d="M1 15.500A14.500 14.500 0 0 1 15.500 1M4.500 15.500a11 11 0 0 1 11-11M8 15.500A7.500 7.500 0 0 1 15.500 8" stroke="#c5c9d2" strokeWidth="1.200" /><path d="M12 15.500V12.500h3v3z" fill="#fff" /></Svg></TrayIcon>
        <TrayIcon $w={33}><Svg s={20} h={16}><path d="M.700 5.500H3.500L8 1.500v13L3.500 10.500H.700z" stroke="#fff" strokeWidth="1.200" /><path d="M10.500 5.500q1.500 2.500 0 5" stroke="#fff" /><path d="M13.500 3.500q3 4.500 0 9M16.500 1q5 7 0 14" stroke="#7b8396" /></Svg></TrayIcon>
        <Lang><Fit w={28}>ENG</Fit></Lang>
        <Clock><Fit w={33}>13:01</Fit><br /><Fit w={70}>02.04.2024</Fit></Clock>
        <Svg s={31} h={36} box="0 -3 31 36"><path d="M0 0h20v14H9.500v5L5 14H0z" fill="#fff" /><path d="M4 4.500h12M4 7.500h12M4 10.500h8" stroke="#1b2644" strokeWidth="1.200" /><circle cx="19.500" cy="20.500" r="9.800" fill="#2b2e38" stroke="#9095a0" /><text x="16" y="26" fill="#fff" fontFamily="Open Sans, sans-serif" fontSize="14">1</text></Svg>
        <Peek />
      </Tray>
    </Taskbar>
  );
}

export default function App() {
  return (
    <Desktop>
      <Global />
      <StudioApp />
      <TaskbarView />
      <Browser />
    </Desktop>
  );
}
